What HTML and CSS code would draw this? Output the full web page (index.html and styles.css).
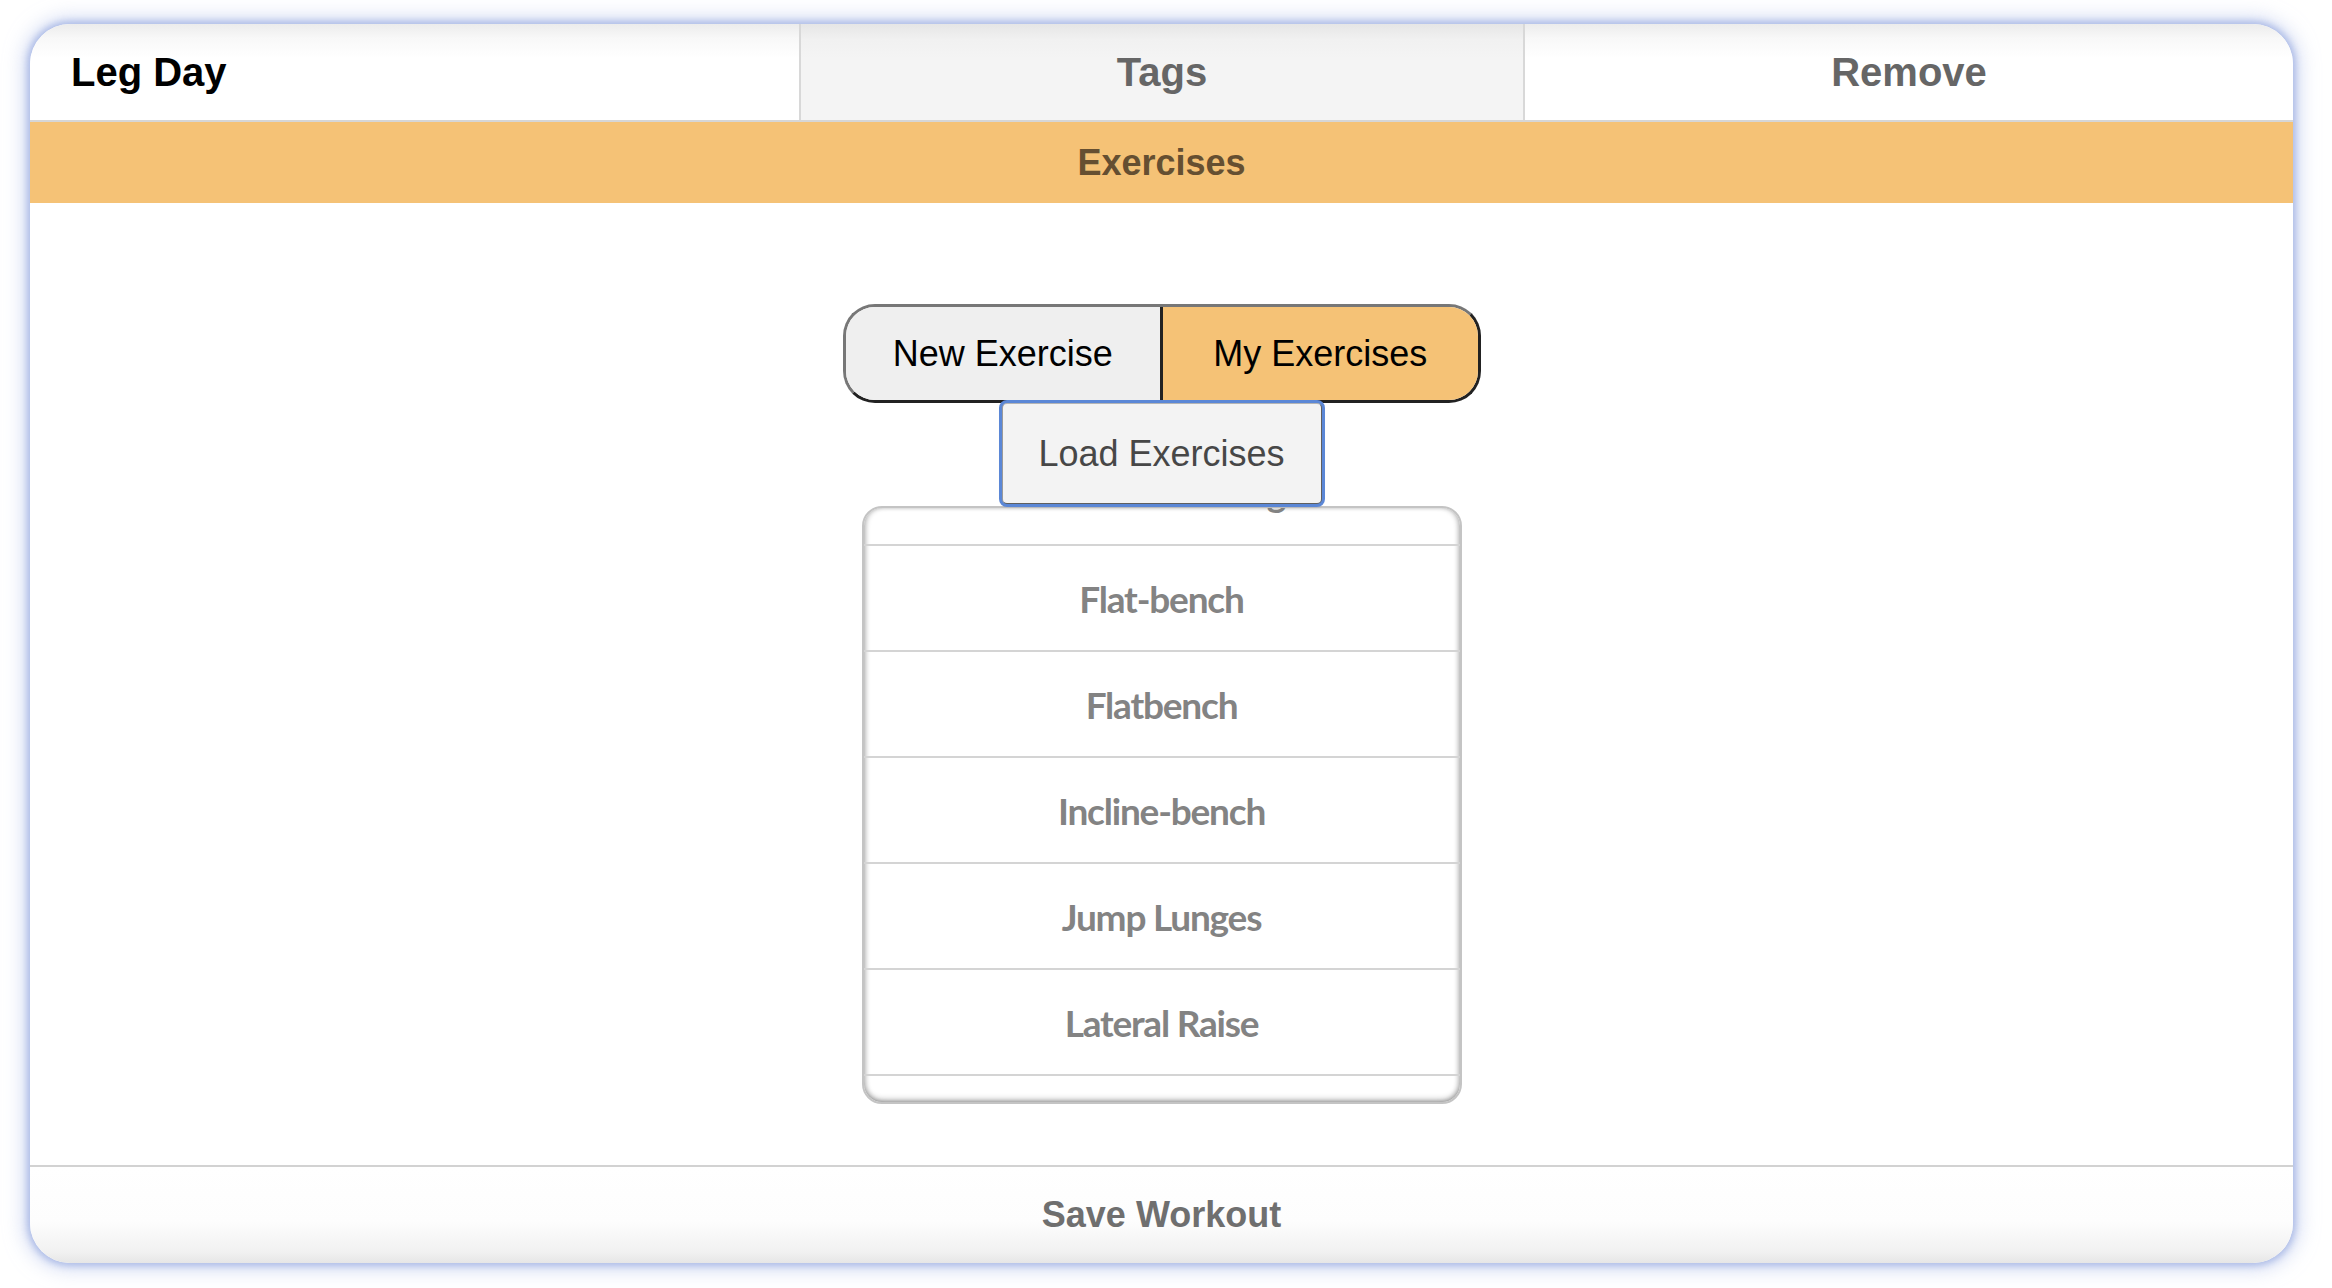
FILE: index.html
```html
<!DOCTYPE html>
<html lang="en">
<head>
<meta charset="utf-8">
<title>Leg Day</title>
<link rel="stylesheet" href="styles.css">
</head>
<body>
<div class="card">
  <header class="tabs">
    <div class="tab tab-title">Leg Day</div>
    <div class="tab tab-tags">Tags</div>
    <div class="tab tab-remove">Remove</div>
  </header>
  <div class="band">Exercises</div>
  <main class="content">
    <div class="segmented">
      <button class="seg seg-new">New Exercise</button>
      <button class="seg seg-mine">My Exercises</button>
    </div>
    <button class="load">Load Exercises</button>
    <ul class="list" id="exlist">
      <li class="row">Dumbbell Shrug</li>
      <li class="row">Flat-bench</li>
      <li class="row">Flatbench</li>
      <li class="row">Incline-bench</li>
      <li class="row">Jump Lunges</li>
      <li class="row">Lateral Raise</li>
      <li class="row">Leg Press</li>
    </ul>
  </main>
  <footer class="footer">Save Workout</footer>
</div>
<script src="script.js"></script>
</body>
</html>
```

FILE: styles.css
```css
html, body {
  margin: 0;
  padding: 0;
  background: #ffffff;
}

body {
  padding: 24px 39px 25px 30px;
  font-family: "Liberation Sans", Arial, sans-serif;
}

.card {
  height: 1239px;
  display: flex;
  flex-direction: column;
  border-radius: 40px;
  overflow: hidden;
  background: #ffffff;
  box-shadow: 0 0 6px 3px rgba(170, 185, 230, 0.9), 0 0 18px 8px rgba(185, 198, 236, 0.55);
}

.tabs {
  display: grid;
  grid-template-columns: 769px 726px 1fr;
  height: 96px;
  border-bottom: 2px solid #d6d6d6;
  background: linear-gradient(to bottom, #ececec 0px, #f8f8f8 14px, #ffffff 34px);
}

.tab {
  display: flex;
  align-items: center;
  justify-content: center;
  font-weight: bold;
  font-size: 40px;
  color: #666666;
}

.tab-title {
  justify-content: flex-start;
  padding-left: 41px;
  color: #000000;
}

.tab-tags {
  border-left: 2px solid #d8d8d8;
  border-right: 2px solid #d8d8d8;
  background: linear-gradient(to bottom, #e6e6e6 0px, #f1f1f1 16px, #f4f4f4 34px);
}

.band {
  height: 81px;
  display: flex;
  align-items: center;
  justify-content: center;
  background: #f5c276;
  color: #654f31;
  font-weight: bold;
  font-size: 36px;
}

.content {
  flex: 1;
  display: flex;
  flex-direction: column;
  align-items: center;
  padding-top: 101px;
}

.segmented {
  display: flex;
  width: 638px;
  height: 99px;
  box-sizing: border-box;
  border: 3px solid #222222;
  border-top-color: #777777;
  border-left-color: #777777;
  border-radius: 32px;
  overflow: hidden;
}

.seg {
  flex: 1;
  margin: 0;
  border: 0;
  font-family: "Liberation Sans", Arial, sans-serif;
  font-size: 36px;
  color: #000000;
  padding: 0;
}

.seg-new {
  background: #efefef;
  border-right: 3px solid #222222;
}

.seg-mine {
  background: #f5c276;
}

.load {
  margin-top: -1px;
  width: 322px;
  height: 103px;
  box-sizing: border-box;
  background: #f3f3f3;
  border: 2px solid #5f5f5f;
  border-top-color: #b4b4b4;
  border-left-color: #9a9a9a;
  border-radius: 6px;
  outline: 3px solid #5b87d6;
  outline-offset: -1px;
  box-shadow: 0 2px 3px rgba(0, 0, 0, 0.12);
  font-family: "Liberation Sans", Arial, sans-serif;
  font-size: 36px;
  color: #474747;
  position: relative;
  z-index: 2;
}

.list {
  list-style: none;
  margin: 1px 0 0 0;
  padding: 0;
  width: 600px;
  height: 598px;
  box-sizing: border-box;
  border: 2px solid #c4c4c4;
  border-radius: 20px;
  overflow-y: auto;
  scrollbar-width: none;
  background: #ffffff;
  box-shadow: inset 3px 0 5px -1px rgba(0, 0, 0, 0.22), inset -3px 0 5px -1px rgba(0, 0, 0, 0.22), inset 0 -4px 6px -2px rgba(0, 0, 0, 0.3);
}

.list::-webkit-scrollbar {
  display: none;
}

.row {
  height: 104px;
  border-bottom: 2px solid #d4d4d4;
  display: flex;
  align-items: center;
  justify-content: center;
  font-family: "Lato", "Open Sans", sans-serif;
  font-weight: bold;
  font-size: 37px;
  letter-spacing: -1.2px;
  color: #838383;
}

.footer {
  height: 96px;
  border-top: 2px solid #d2d2d2;
  display: flex;
  align-items: center;
  justify-content: center;
  font-weight: bold;
  font-size: 36px;
  color: #6f6f6f;
  background: linear-gradient(to bottom, #ffffff 0px, #fdfdfd 55px, #f1f1f1 85px, #e6e6e6 96px);
}
```

FILE: script.js
```js
document.getElementById('exlist').scrollTop = 68;
```
